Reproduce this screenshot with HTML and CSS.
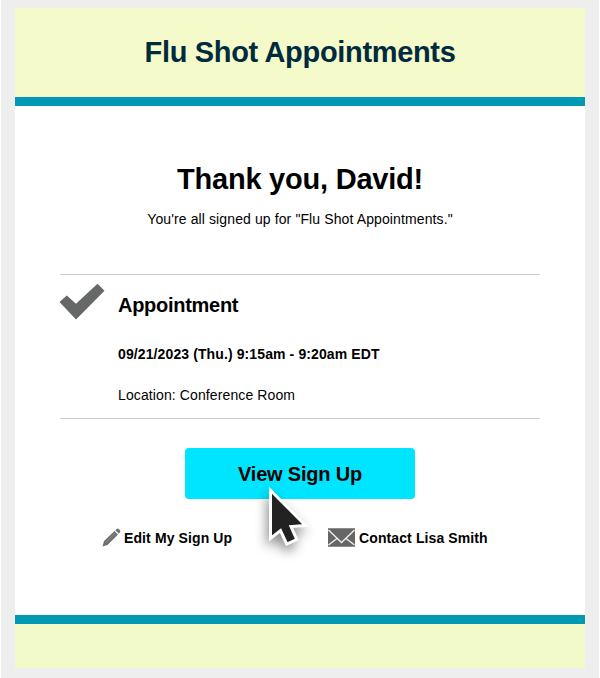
FILE: index.html
```html
<!DOCTYPE html>
<html lang="en">
<head>
<meta charset="utf-8">
<title>Flu Shot Appointments</title>
<link rel="stylesheet" href="styles.css">
</head>
<body>
<main class="card">
  <header class="banner"><h1>Flu Shot Appointments</h1></header>
  <section class="content">
    <h2>Thank you, David!</h2>
    <p class="intro">You're all signed up for "Flu Shot Appointments."</p>
    <article class="slot">
      <svg class="check" width="46" height="38" viewBox="0 0 46 38"><path d="M-.5 18 6.800 11.500 16 19.700 37.500-.3 44.500 6.700 16 35.500Z" fill="#666867"/></svg>
      <div class="details">
        <h3>Appointment</h3>
        <p class="time">09/21/2023 (Thu.) 9:15am - 9:20am EDT</p>
        <p class="place">Location: Conference Room</p>
      </div>
    </article>
    <div class="action">
      <a class="button"><span>View Sign Up</span></a>
      <svg class="cursor" width="80" height="100" viewBox="0 0 80 100"><path d="M19.500 10.300V58.500L29.500 50.500 35.700 64 45.700 59.500 40 46.500 54.500 45.500Z" fill="#222" stroke="#fff" stroke-width="3"/></svg>
    </div>
    <nav class="links">
      <a class="edit"><svg width="19" height="19" viewBox="0 0 19 19"><path d="M.5 18.500 2 13 12.500 3 16 6.500 5.500 17ZM13.300 2.200 15 .7Q16 .2 17 1.200L18 2.300Q18.800 3.200 18 4.200L16.700 5.600Z" fill="#707070"/><path d="M4 14 13.500 5" stroke="#999" stroke-width=".7"/></svg><span>Edit My Sign Up</span></a>
      <a class="contact"><svg width="27" height="19" viewBox="0 0 27 19"><path d="M0 0H27V19H0Z" fill="#666"/><path d="M0 .5H27M0 18.500H27" stroke="#8c8c8c"/><path d="M.5 2 13.500 14.500 26.500 2M.5 17 9 10.500M26.500 17 18 10.500" fill="none" stroke="#eee" stroke-width="1.400"/></svg><span>Contact Lisa Smith</span></a>
    </nav>
  </section>
  <footer class="footer"></footer>
</main>
</body>
</html>
```
FILE: styles.css
```css
* { box-sizing: border-box; }
html { background: #fff; }
body { margin: 0 1px; padding: 8px 14px 10px; height: 678px; background: #eee; color: #000; font-family: "Liberation Sans", Arial, sans-serif; }
h1, h2, h3, p { margin: 0; white-space: nowrap; }
svg { display: block; flex: none; overflow: visible; }
.card { height: 660px; display: flex; flex-direction: column; background: #fff; }
.banner { height: 98px; background: #f4fac9; border-bottom: 9px solid #0099b4; text-align: center; }
h1 { font-size: 29px; line-height: 34px; padding-top: 27px; letter-spacing: -.33px; color: #002a3e; }
.content { flex: 1; padding: 56px 45px 0; text-align: center; }
h2 { font-size: 29px; line-height: 34px; letter-spacing: -.22px; }
.intro { font-size: 14px; line-height: 18px; margin-top: 14px; letter-spacing: .11px; }
.slot { display: flex; height: 145px; margin-top: 46px; padding-top: 9px; border: 1px solid #ccc; border-width: 1px 0; text-align: left; }
.details { margin-left: 12px; }
h3 { font-size: 20px; line-height: 24px; margin-top: 9px; letter-spacing: -.28px; }
.time { font-size: 14px; line-height: 18px; font-weight: 700; margin-top: 28px; letter-spacing: .11px; }
.place { font-size: 14px; line-height: 18px; margin-top: 23px; letter-spacing: .11px; }
.action { position: relative; width: 230px; margin: 29px auto 0; }
.button { display: block; height: 51px; border-radius: 4px; background: #00e5ff; font-size: 20px; line-height: 53px; font-weight: 700; letter-spacing: -.2px; }
.cursor { position: absolute; left: 66px; top: 32px; filter: drop-shadow(-2px 6px 6px rgba(0,0,0,.45)); }
.links { display: flex; margin: 28px 0 0 42px; font-size: 14px; line-height: 20px; font-weight: 700; letter-spacing: .11px; white-space: nowrap; }
.links a { display: flex; align-items: center; }
.links span { padding-top: 1px; }
.edit { width: 226px; gap: 3px; }
.contact { gap: 4px; }
.footer { height: 53px; background: #f3fac9; border-top: 9px solid #0099b4; }
```
